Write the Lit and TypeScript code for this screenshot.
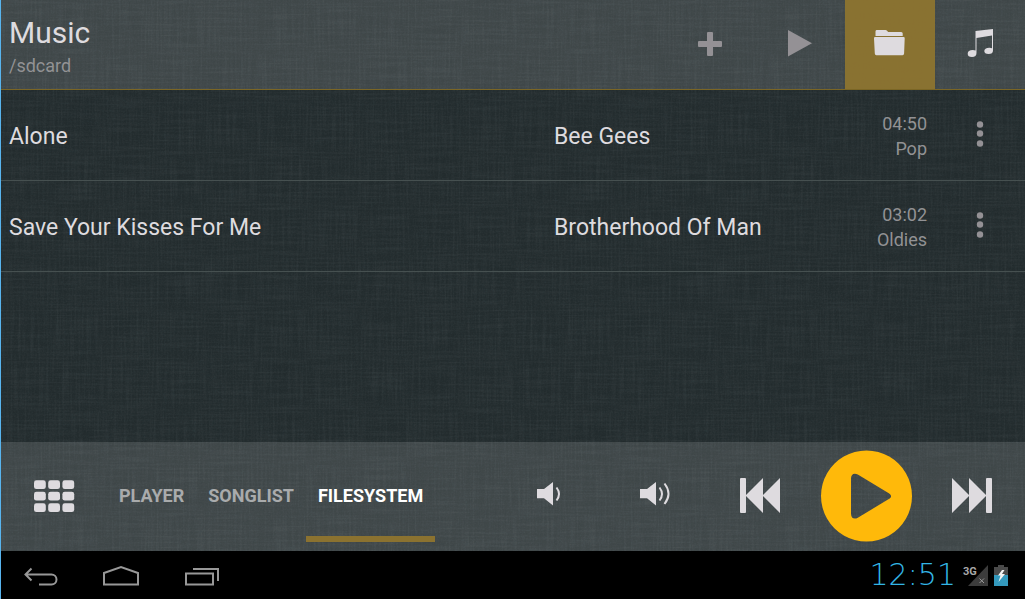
import { LitElement, html, css, svg, unsafeCSS } from "lit";
import { customElement, state } from "lit/decorators.js";

const weave = (fx: number, fy: number, seed: number, gain: number, bias: number) =>
  `<filter id="f${seed}" x="0" y="0" width="100%" height="100%"><feTurbulence type="fractalNoise" baseFrequency="${fx} ${fy}" numOctaves="2" seed="${seed}" stitchTiles="stitch"/><feColorMatrix values="0 0 0 0 .5 0 0 0 0 .55 0 0 0 0 .57 ${gain} 0 0 0 ${bias}"/></filter><rect width="512" height="512" filter="url(#f${seed})"/>`;

const linen = unsafeCSS(
  `url("data:image/svg+xml,${encodeURIComponent(
    `<svg xmlns="http://www.w3.org/2000/svg" width="512" height="512">${
      weave(0.02, 0.5, 3, 0.1, -0.04)}${weave(0.5, 0.02, 8, 0.1, -0.04)}${weave(0.6, 0.6, 5, 0.08, -0.03)}</svg>`
  )}")`
);

interface Song {
  title: string;
  artist: string;
  length: string;
  genre: string;
}

const songs: Song[] = [
  { title: "Alone", artist: "Bee Gees", length: "04:50", genre: "Pop" },
  { title: "Save Your Kisses For Me", artist: "Brotherhood Of Man", length: "03:02", genre: "Oldies" },
];

const headerIcon = (shape: unknown) =>
  html`<svg class="icon" width="90" height="89" viewBox="0 0 90 89" aria-hidden="true">${shape}</svg>`;
const footerIcon = (shape: unknown) =>
  html`<svg class="icon" width="106" height="109" viewBox="0 0 106 109" aria-hidden="true">${shape}</svg>`;
const navIcon = (shape: unknown) =>
  html`<svg class="icon line" width="80" height="48" viewBox="0 0 80 48" aria-hidden="true">${shape}</svg>`;

const gridCells = [0, 1, 2].flatMap((r) =>
  [0, 1, 2].map((c) => svg`<rect x=${33 + c * 14.2} y=${38.3 + r * 11.5} width="11.8" height="8.8" rx="2.4"/>`)
);

@customElement("app-root")
export class AppRoot extends LitElement {
  static styles = css`
    :host {
      display: flex;
      flex-direction: column;
      box-sizing: border-box;
      min-height: 100vh;
      border-left: 1px solid #58b4ee;
      background: #222b2d ${linen};
      color: #dedbdf;
      font-family: Roboto, sans-serif;
    }
    button {
      display: block;
      margin: 0;
      padding: 0;
      border: 0;
      background: none;
      color: inherit;
      font: inherit;
      cursor: pointer;
    }
    .icon {
      display: block;
      fill: currentColor;
    }
    .header {
      display: flex;
      justify-content: space-between;
      background: rgba(255, 255, 255, 0.13);
      border-bottom: 1px solid #7b6625;
      background-clip: padding-box;
    }
    .heading {
      display: flex;
      flex-direction: column;
      padding: 14px 8px 0;
    }
    .name {
      margin: 0;
      font-size: 30px;
      line-height: 38px;
      font-weight: 400;
    }
    .path {
      margin: 0;
      font-size: 18px;
      line-height: 28px;
      color: #929294;
    }
    .actions {
      display: flex;
    }
    .dim {
      color: #949195;
    }
    .active {
      background: #8f752fee;
    }
    .list {
      flex: 1;
      margin: 0;
      padding: 0;
      list-style: none;
    }
    .row {
      display: grid;
      grid-template-columns: minmax(0, 545fr) minmax(0, 281fr) 100px 90px;
      align-items: center;
      min-height: 90px;
      padding-left: 8px;
      border-bottom: 1px solid #465050;
    }
    .main {
      padding-top: 4px;
      font-size: 23px;
      line-height: 28px;
    }
    .meta {
      padding: 2px 8px 0 0;
      font-size: 18px;
      line-height: 25px;
      text-align: right;
      color: #929294;
    }
    .footer {
      display: flex;
      justify-content: space-between;
      background: rgba(255, 255, 255, 0.13);
    }
    .group,
    .tabs {
      display: flex;
    }
    .tabs {
      padding-bottom: 9px;
    }
    .tab {
      padding: 12px 12px 0;
      border-bottom: 6px solid transparent;
      font-size: 18px;
      font-weight: 700;
      color: #a9abac;
    }
    .tab.current {
      color: #fff;
      border-color: #8b7230;
    }
    .system {
      display: flex;
      justify-content: space-between;
      align-items: center;
      background: #000;
      color: #989898;
    }
    .line {
      fill: none;
      stroke: currentColor;
      stroke-width: 2;
    }
    .status {
      display: flex;
      align-items: center;
      gap: 6px;
      padding-right: 17px;
    }
    .clock {
      font-family: "DejaVu Sans Light", "DejaVu Sans", sans-serif;
      font-size: 30px;
      line-height: 48px;
      font-weight: 200;
      color: #33b5e5;
    }
    .network {
      font: 700 11px Roboto, sans-serif;
    }
  `;

  @state() private view = "FILESYSTEM";
  @state() private source = "folder";

  render() {
    return html`
      <header class="header">
        <div class="heading">
          <h1 class="name">Music</h1>
          <p class="path">/sdcard</p>
        </div>
        <div class="actions">
          <button class="dim" aria-label="Add">
            ${headerIcon(svg`<path d="M43 32h4q1 0 1 1v8h8q1 0 1 1v4q0 1-1 1h-8v8q0 1-1 1h-4q-1 0-1-1v-8h-8q-1 0-1-1v-4q0-1 1-1h8v-8q0-1 1-1z"/>`)}
          </button>
          <button class="dim" aria-label="Play all">
            ${headerIcon(svg`<path d="M33 30L57 43.2L33 56.5z"/>`)}
          </button>
          <button class=${this.source === "folder" ? "active" : ""} aria-label="Folders"
            @click=${() => (this.source = "folder")}>
            ${headerIcon(svg`<path d="M31.5 30h9q1 0 1.500.7l1.200 1.300h13q1.500 0 1.500 1.500V36H30.500v-4.500q0-1.500 1-1.500z"/><path d="M30 37h28.500q1.300 0 1.200 1.300l-.6 15.200q-.1 1.700-1.600 1.700H31.400q-1.500 0-1.600-1.700L29 38.300q0-1.300 1-1.300z"/>`)}
          </button>
          <button class=${this.source === "songs" ? "active" : ""} aria-label="Songs"
            @click=${() => (this.source = "songs")}>
            ${headerIcon(svg`<path d="M40.500 31L58 29V50.500q0 3.500-4.500 3.500-4.200 0-4.200-3t5-3.200q1.500-.1 2.700.4V35.500L41.500 38V53q0 4-4.500 4-4.300 0-4.300-3.300 0-3.700 5.200-3.700 1.500 0 2.600.4z"/>`)}
          </button>
        </div>
      </header>

      <ul class="list">
        ${songs.map(
          (song) => html`
            <li class="row">
              <span class="main">${song.title}</span>
              <span class="main">${song.artist}</span>
              <div class="meta">
                <div>${song.length}</div>
                <div>${song.genre}</div>
              </div>
              <button class="dim" aria-label="Options for ${song.title}">
                ${headerIcon(svg`<circle cx="45" cy="33.500" r="3.200"/><circle cx="45" cy="42.500" r="3.200"/><circle cx="45" cy="52.500" r="3.200"/>`)}
              </button>
            </li>
          `
        )}
      </ul>

      <footer class="footer">
        <div class="group">
          <button aria-label="Library">${footerIcon(gridCells)}</button>
          <nav class="tabs">
            ${["PLAYER", "SONGLIST", "FILESYSTEM"].map(
              (name) => html`<button class="tab ${this.view === name ? "current" : ""}"
                @click=${() => (this.view = name)}>${name}</button>`
            )}
          </nav>
        </div>
        <div class="group">
          <button aria-label="Volume down">
            ${footerIcon(svg`<path d="M42 47h7l9-7v23.500l-9-7.200h-7z"/><path d="M61.500 45.500q5 6.500 0 13" fill="none" stroke="currentColor" stroke-width="2"/>`)}
          </button>
          <button aria-label="Volume up">
            ${footerIcon(svg`<path d="M39 47h7l9-7v23.500l-9-7.200h-7z"/><path d="M58.500 45.500q5 6.500 0 13M63.500 41.500q8 10.200 0 20.500" fill="none" stroke="currentColor" stroke-width="2"/>`)}
          </button>
          <button aria-label="Previous">
            ${footerIcon(svg`<rect x="33" y="36" width="6" height="35" rx="1"/><path d="M38.500 53.500L56 36v35zM55.500 53.500L73 36v35z"/>`)}
          </button>
          <button aria-label="Play">
            ${footerIcon(svg`<path fill="#ffb90a" fill-rule="evenodd" d="M53.500 8.500a45.500 45.500 0 1 0 .01 0zM38 36.500c0-4.500 3.200-6 6.800-4l31 18.800c3 1.800 3 4 0 5.800l-31 18.600c-3.600 2-6.800.5-6.800-4z"/>`)}
          </button>
          <button aria-label="Next">
            ${footerIcon(svg`<path d="M33 36L50.500 53.500L33 71zM50 36L67.500 53.500L50 71z"/><rect x="67" y="36" width="6" height="35" rx="1"/>`)}
          </button>
        </div>
      </footer>

      <div class="system">
        <div class="group">
          <button aria-label="Back">
            ${navIcon(svg`<path d="M30.500 17.500L24.500 23.500L30.500 29.500M25 23.500H50.500a5 5 0 0 1 0 10H38"/>`)}
          </button>
          <button aria-label="Home">
            ${navIcon(svg`<path d="M23 22L40 16L57 22V33.500H23z"/>`)}
          </button>
          <button aria-label="Recent apps">
            ${navIcon(svg`<path d="M25 22.500H52V33.500H25zM32 18H57V30"/>`)}
          </button>
        </div>
        <div class="status">
          <time class="clock">12:51</time>
          <svg width="46" height="26" viewBox="0 -3 46 26" role="img" aria-label="3G, no signal; battery charging">
            <path d="M26 0V21H6z" fill="#3c3c3c"/>
            <text class="network" x="1" y="10" fill="#a8a8a8">3G</text>
            <path d="M17.500 13.500l4.500 4.500m0-4.500l-4.500 4.500" stroke="#999" fill="none"/>
            <path d="M36 0h6v2h4v8H32V2h4z" fill="#4a4a4a"/>
            <path d="M32 10h14v11H32z" fill="#3499bd"/>
            <path d="M40 5l-4 5.500h2.500L36.500 17l6.500-8h-3l2.500-4z" fill="#f4f4f4"/>
          </svg>
        </div>
      </div>
    `;
  }
}
